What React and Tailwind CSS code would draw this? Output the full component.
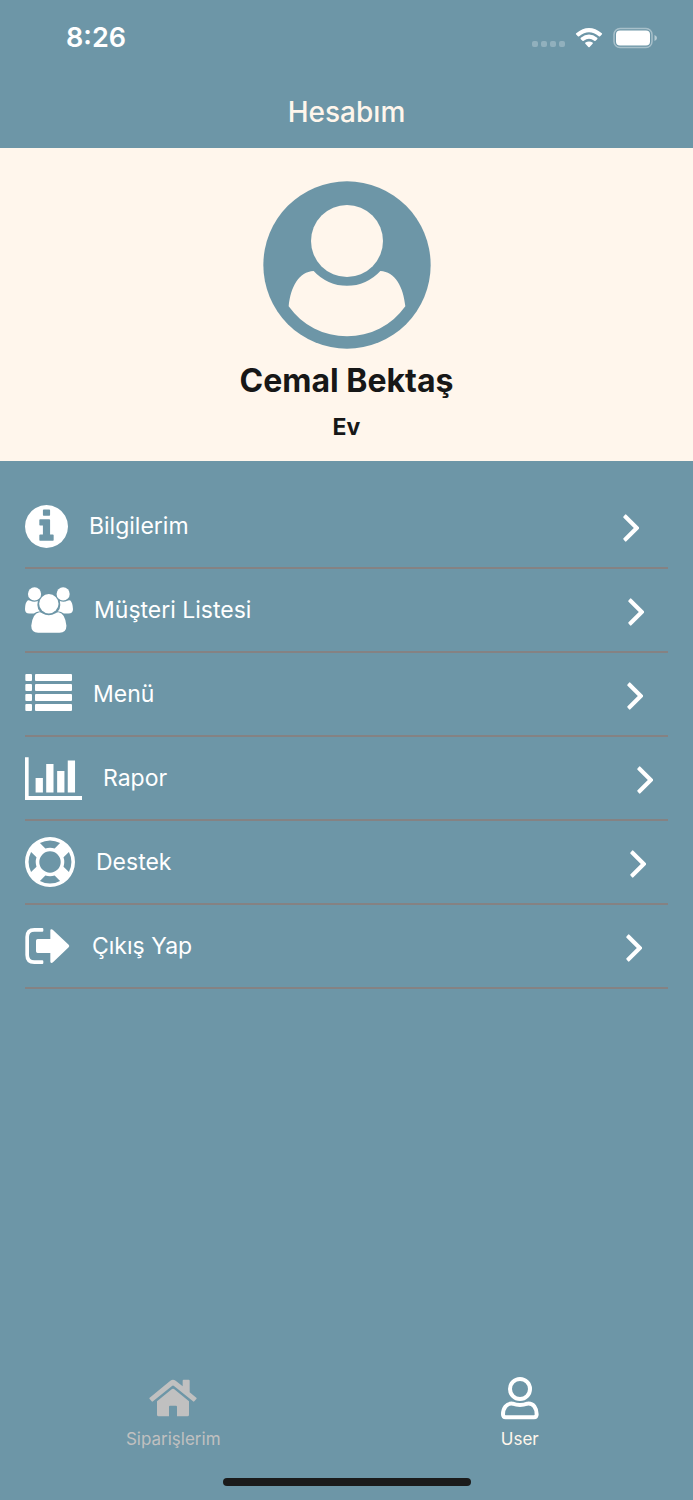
import React from 'react';

// Menu icons
const InfoIcon = () => (
    <svg className="w-[43px] h-[43px] shrink-0" viewBox="128 128 1536 1536" fill="currentColor" aria-hidden="true">
        <path d="M1152 1376v-160q0-14-9-23t-23-9h-96v-512q0-14-9-23t-23-9h-320q-14 0-23 9t-9 23v160q0 14 9 23t23 9h96v320h-96q-14 0-23 9t-9 23v160q0 14 9 23t23 9h448q14 0 23-9t9-23zm-128-896v-160q0-14-9-23t-23-9h-192q-14 0-23 9t-9 23v160q0 14 9 23t23 9h192q14 0 23-9t9-23zm640 416q0 209-103 385.5t-279.5 279.5-385.5 103-385.5-103-279.5-279.5-103-385.5 103-385.5 279.5-279.5 385.5-103 385.5 103 279.5 279.5 103 385.5z" />
    </svg>
);

const PeopleIcon = () => (
    <svg className="w-12 h-12 shrink-0" viewBox="76 320 146 144" fill="currentColor" aria-hidden="true">
        <circle cx="105" cy="343" r="20" />
        <circle cx="192" cy="343" r="20" />
        <circle cx="148.500" cy="373" r="29.500" />
        <path d="M84 363Q88 361 92 364Q103 370 115 365Q112 375 116 389Q119 394 122 396Q110 397 103 403H89Q76 403 76 390Q76 370 84 363Z" />
        <path d="M214 363Q209 361 205 364Q194 370 182 365Q185 375 181 389Q178 394 175 396Q187 397 194 403H208Q222 403 222 390Q221 370 214 363Z" />
        <path d="M120 399Q124 399 128 402Q148 414 169 402Q173 399 178 399Q198 402 202 440Q202 461 181 461H116Q95 461 95 440Q99 402 120 399Z" />
    </svg>
);

const ListIcon = () => (
    <svg className="w-[47px] h-10 shrink-0" viewBox="75 582 141 120" fill="currentColor" aria-hidden="true">
        {[582, 612, 642, 672].map((y) => (
            <g key={y}>
                <rect x="76" y={y} width="20" height="21" rx="3" />
                <rect x="105" y={y} width="111" height="21" rx="3" />
            </g>
        ))}
    </svg>
);

const ChartIcon = () => (
    <svg className="w-[57px] h-[43px] shrink-0" viewBox="76 51 172 129" fill="currentColor" aria-hidden="true">
        <path d="M76 51h11v117h161v12H76zM108 114h22v44h-22zM140 72h22v86h-22zM173 93h22v65h-22zM205 61h22v97h-22z" />
    </svg>
);

const LifeRingIcon = () => (
    <svg className="w-[50px] h-[50px] shrink-0" viewBox="0 0 1792 1792" fill="currentColor" aria-hidden="true">
        <path d="M896 0q182 0 348 71t286 191 191 286 71 348-71 348-191 286-286 191-348 71-348-71-286-191-191-286-71-348 71-348 191-286 286-191 348-71zm0 128q-190 0-361 90l194 194q82-28 167-28t167 28l194-194q-171-90-361-90zm-678 1129l194-194q-28-82-28-167t28-167l-194-194q-90 171-90 361t90 361zm678 407q190 0 361-90l-194-194q-82 28-167 28t-167-28l-194 194q171 90 361 90zm0-384q159 0 271.5-112.5t112.5-271.5-112.5-271.5-271.5-112.5-271.5 112.5-112.5 271.5 112.5 271.5 271.5 112.5zm484-217l194 194q90-171 90-361t-90-361l-194 194q28 82 28 167t-28 167z" />
    </svg>
);

const ExitIcon = () => (
    <svg className="w-[46px] h-9 shrink-0" viewBox="75 563 138 108" fill="currentColor" aria-hidden="true">
        <path d="M103 563H127Q130 563 130 566V571Q130 574 127 574H103Q87 574 87 590V644Q87 660 103 660H127Q130 660 130 663V668Q130 671 127 671H103Q76 671 76 644V590Q76 563 103 563Z" />
        <path d="M151 570Q151 567 154 567Q157 567 159 569L206 613Q210 617 206 621L159 666Q157 668 154 668Q151 667 151 664V638H113Q108 638 108 633V601Q108 596 113 596H151Z" />
    </svg>
);

const ChevronIcon = () => (
    <svg className="w-4 h-7 mt-1 shrink-0" viewBox="0 0 16 28" fill="currentColor" aria-hidden="true">
        <path d="M0.500 2.500L2 0.700Q2.700 0 3.400 0.700L16 13.300Q16.600 14 16 14.700L3.400 27.300Q2.700 28 2 27.300L0.500 25.500Q0 24.800 0.500 24.200L10.800 14L0.500 3.800Q0 3.200 0.500 2.500Z" />
    </svg>
);

const AvatarIcon = () => (
    <svg className="w-[168px] h-[168px]" viewBox="126 63 504 504" aria-hidden="true">
        <circle cx="378" cy="315" r="251" className="fill-[#6d96a7]" />
        <circle cx="378" cy="243" r="108" className="fill-[#fff6ec]" />
        <path d="M278 333A135 135 0 0 0 478 333C522 335 547 380 553 439A215 215 0 0 1 203 439C209 380 234 335 278 333Z" className="fill-[#fff6ec]" />
    </svg>
);

const HomeIcon = () => (
    <svg className="w-12 h-[38px]" viewBox="148 88 144 114" fill="currentColor" aria-hidden="true">
        <path d="M150 144L212 93Q220 87 228 93L249 110V93Q249 90 252 90H267Q270 90 270 93V128L290 144Q292 146 290 148L284 155Q282 157 280 155L223 109Q220 106 217 109L160 155Q158 157 156 155L150 148Q148 146 150 144Z" />
        <path d="M172 155L217 118Q220 116 223 118L268 155V195Q268 200 263 200H232V171Q232 168 229 168H211Q208 168 208 171V200H177Q172 200 172 195Z" />
    </svg>
);

const UserIcon = () => (
    <svg className="w-10 h-11" viewBox="1200 78 120 132" fill="none" stroke="currentColor" strokeWidth="12" aria-hidden="true">
        <circle cx="1260" cy="117" r="30" />
        <path d="M1238 161Q1260 169 1282 161C1301 159 1310 175 1310 193Q1310 202 1302 202H1217Q1209 202 1209 193C1209 175 1219 159 1238 161Z" />
    </svg>
);

// Menu items
const menuItems = [
    { name: 'Bilgilerim', icon: InfoIcon },
    { name: 'Müşteri Listesi', icon: PeopleIcon },
    { name: 'Menü', icon: ListIcon },
    { name: 'Rapor', icon: ChartIcon },
    { name: 'Destek', icon: LifeRingIcon },
    { name: 'Çıkış Yap', icon: ExitIcon }
];

const StatusBar = () => (
    <div className="flex items-center justify-between h-[76px] pl-[66px] pr-9 text-white">
        <span className="text-[27px] leading-8 font-semibold">8:26</span>
        <div className="flex items-center">
            <div className="flex gap-[3px] mt-3 mr-[10px]">
                {[0, 1, 2, 3].map((dot) => (
                    <span key={dot} className="w-[6px] h-[6px] rounded-xs bg-white/25" />
                ))}
            </div>
            <svg className="w-7 h-5 mr-[10px]" viewBox="166 38 80 61" fill="currentColor" aria-hidden="true">
                <path d="M167 54Q206 22 245 54Q247 56 245 58L240 63Q238 65 236 63Q206 39 176 63Q174 65 172 63L167 58Q165 56 167 54Z" />
                <path d="M181 68Q206 48 231 68Q233 70 231 72L226 77Q224 79 222 77Q206 65 190 77Q188 79 186 77L181 72Q179 70 181 68Z" />
                <path d="M195 82Q206 76 217 82Q219 84 217 86L208 96Q206 98 204 96L195 86Q193 84 195 82Z" />
            </svg>
            <svg className="w-11 h-[22px]" viewBox="0 0 44 22" aria-hidden="true">
                <rect x="1" y="1.500" width="38" height="19" rx="6" fill="none" stroke="white" strokeOpacity="0.4" strokeWidth="1.500" />
                <rect x="3" y="3.500" width="34" height="15" rx="4" fill="white" />
                <path d="M41.500 8Q44 9 44 11T41.500 14Z" fill="white" fillOpacity="0.5" />
            </svg>
        </div>
    </div>
);

const App = () => {
    return (
        <div className="min-h-screen flex flex-col bg-[#6d96a7] font-['Inter','Liberation_Sans',sans-serif]">
            <header>
                <StatusBar />
                <h1 className="h-[72px] pt-5 text-center text-[28px] leading-8 font-medium text-[#fff6ec]">Hesabım</h1>
            </header>

            {/* Profile */}
            <section className="flex flex-col items-center h-[313px] pt-[33px] bg-[#fff6ec] text-[#171717]">
                <AvatarIcon />
                <h2 className="mt-3 text-[32px] leading-10 font-bold">Cemal Bektaş</h2>
                <p className="mt-3 text-[23px] leading-7 font-bold">Ev</p>
            </section>

            {/* Menu */}
            <nav className="pt-6 px-[25px]">
                {menuItems.map((item) => (
                    <button
                        key={item.name}
                        type="button"
                        className="flex items-center w-full h-[84px] border-b-2 border-[#858283] text-left text-white"
                    >
                        <item.icon />
                        <span className="w-[83%] shrink-0 ml-[21px] text-[23px] leading-7">{item.name}</span>
                        <ChevronIcon />
                    </button>
                ))}
            </nav>

            {/* Tab bar */}
            <footer className="mt-auto">
                <div className="grid grid-cols-2 h-[102px]">
                    <button type="button" className="flex flex-col items-center justify-end text-[#c0c0c0]">
                        <HomeIcon />
                        <span className="mt-3 mb-[25px] text-[17px] leading-5">Siparişlerim</span>
                    </button>
                    <button type="button" className="flex flex-col items-center justify-end text-white">
                        <UserIcon />
                        <span className="mt-[9px] mb-[25px] text-[17px] leading-5 text-[#fff6ec]">User</span>
                    </button>
                </div>
                <div className="w-[248px] h-2 mt-1 mb-[14px] mx-auto rounded-full bg-[#1b1b1b]" />
            </footer>
        </div>
    );
};

export default App;
